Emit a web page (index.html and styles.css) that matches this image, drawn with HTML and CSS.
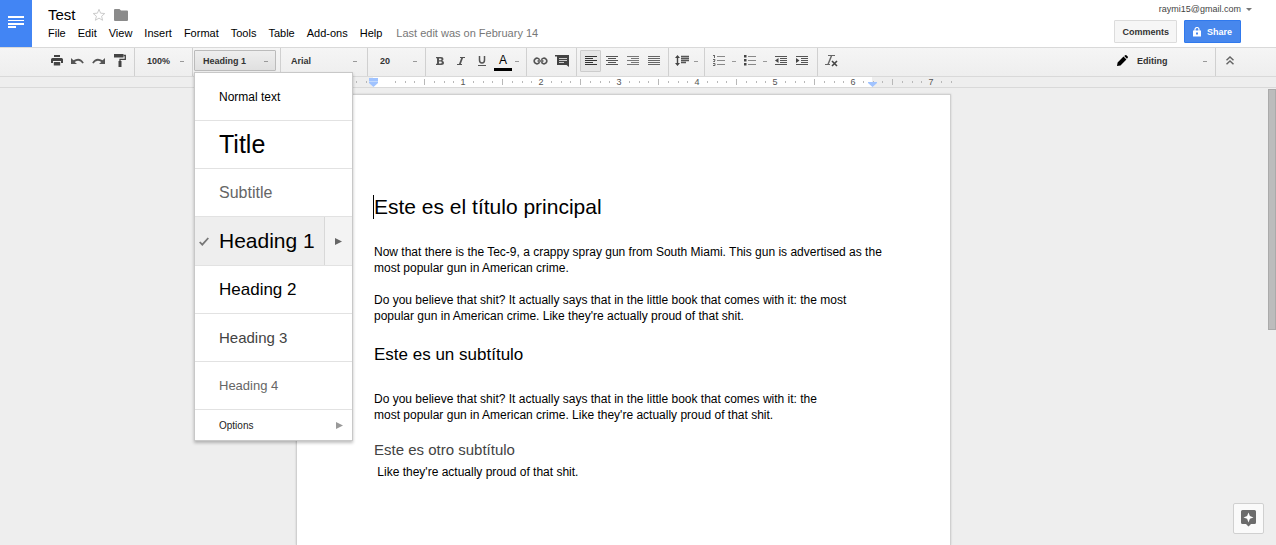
FILE: index.html
```html
<!DOCTYPE html>
<html lang="en">
<head>
<meta charset="utf-8">
<title>Test</title>
<link rel="stylesheet" href="styles.css">
</head>
<body>
<svg class="defs" aria-hidden="true">
  <defs>
    <g id="inch" fill="#b8b8b8">
      <rect x="0" y="2" width="1" height="6"/>
      <rect x="10" y="4" width="1" height="2"/><rect x="20" y="4" width="1" height="2"/><rect x="29" y="4" width="1" height="2"/>
      <rect x="49" y="4" width="1" height="2"/><rect x="59" y="4" width="1" height="2"/><rect x="68" y="4" width="1" height="2"/>
    </g>
  </defs>
</svg>
<header class="header">
  <a class="home" href="#" aria-label="Docs home">
    <svg width="16" height="13" viewBox="0 0 16 13" fill="#fff"><path d="M0 0h16v2H0zM0 4h16v1H0zM0 7h16v2H0zM0 10h8v2H0z"/></svg>
  </a>
  <div class="heading">
    <div class="title-row">
      <h1 class="doc-title">Test</h1>
      <button class="plain" aria-label="Star"><svg width="14" height="14" viewBox="0 0 14 14" fill="none" stroke="#ccc"><path d="M7 1.300l1.600 3.900 4.200.3-3.200 2.700 1 4.100L7 10.100l-3.600 2.200 1-4.100L1.200 5.500l4.200-.3z"/></svg></button>
      <button class="plain" aria-label="Move to folder"><svg width="14" height="12" viewBox="0 0 14 12" fill="#8b8b8b"><path d="M1 0h4.500l1.500 1.500H13q1 0 1 1V11q0 1-1 1H1q-1 0-1-1V1q0-1 1-1z"/></svg></button>
    </div>
    <nav class="menubar">
      <button class="plain">File</button><button class="plain">Edit</button><button class="plain">View</button><button class="plain">Insert</button><button class="plain">Format</button><button class="plain">Tools</button><button class="plain">Table</button><button class="plain">Add-ons</button><button class="plain">Help</button>
      <a class="last-edit" href="#">Last edit was on February 14</a>
    </nav>
  </div>
  <div class="account">
    <button class="plain email">raymi15@gmail.com <svg width="6" height="3" viewBox="0 0 6 3" fill="#777"><path d="M0 0h6L3 3z"/></svg></button>
    <div class="actions">
      <button class="action">Comments</button>
      <button class="action share"><svg width="8" height="10" viewBox="0 0 8 10"><path d="M2 4V2.500a2 2 0 0 1 4 0V4" fill="none" stroke="#fff" stroke-width="1.200"/><path fill="#fff" fill-rule="evenodd" d="M0 3.500h8V9.500H0zM3 5.500v2h2v-2z"/></svg>Share</button>
    </div>
  </div>
</header>

<div class="toolbar" role="toolbar">
  <div class="group first">
    <button class="tool" aria-label="Print"><svg width="12" height="11" viewBox="0 0 12 11" fill="#444"><path d="M3 0h6v2H3zM1.500 3h9Q12 3 12 4.500V8h-2V6H2v2H0V4.500Q0 3 1.500 3z"/><path d="M2.800 7h6.400v3.500H2.800z"/></svg></button>
    <button class="tool" aria-label="Undo"><svg width="13" height="8" viewBox="0 0 13 8"><path d="M0 1v6h6L3.700 4.900Q8.500 1.800 11.500 6.500l1.300-.8Q9-.8 2.400 3.300z" fill="#555"/></svg></button>
    <button class="tool" aria-label="Redo"><svg width="13" height="8" viewBox="0 0 13 8"><path d="M13 1v6H7l2.300-2.100Q4.500 1.800 1.500 6.500L.2 5.700Q4-.8 10.600 3.300z" fill="#555"/></svg></button>
    <button class="tool" aria-label="Paint format"><svg width="12" height="13" viewBox="0 0 12 13"><path d="M0 0h9.500v3.500H0zM4.500 7h3v6h-3z" fill="#444"/><path d="M9.500 1.500h1.800v3.800H6V8" fill="none" stroke="#444" stroke-width="1.300"/></svg></button>
  </div>
  <div class="group zoom"><select class="drop" aria-label="Zoom"><option>100%</option></select></div>
  <div class="group styles">
    <button class="drop style-button" aria-haspopup="menu" aria-expanded="true">Heading 1</button>
    <div class="style-menu" role="menu">
      <button class="item normal" role="menuitem">Normal text</button>
      <button class="item title" role="menuitem">Title</button>
      <button class="item subtitle" role="menuitem">Subtitle</button>
      <button class="item h1 selected" role="menuitem"><svg class="check" width="10" height="9" viewBox="0 0 10 9"><path d="M.7 5l2.600 2.700L9.300 1" fill="none" stroke="#777" stroke-width="1.800"/></svg><span class="label">Heading 1</span><span class="more"><svg width="7" height="7" viewBox="0 0 7 7" fill="#666"><path d="M0 0l7 3.500L0 7z"/></svg></span></button>
      <button class="item h2" role="menuitem">Heading 2</button>
      <button class="item h3" role="menuitem">Heading 3</button>
      <button class="item h4" role="menuitem">Heading 4</button>
      <button class="item options" role="menuitem"><span class="label">Options</span><svg width="7" height="7" viewBox="0 0 7 7" fill="#999"><path d="M0 0l7 3.500L0 7z"/></svg></button>
    </div>
  </div>
  <div class="group font"><select class="drop" aria-label="Font"><option>Arial</option></select></div>
  <div class="group size"><select class="drop" aria-label="Font size"><option>20</option></select></div>
  <div class="group text-tools">
    <button class="tool" aria-label="Bold"><svg width="8" height="8" viewBox="0 0 8 8"><path fill="#555" fill-rule="evenodd" d="M0 0h5q2.500 0 2.500 2 0 1.300-1.200 1.800Q8 4.300 8 5.800 8 8 5.300 8H0V6.700h1V1.300H0zM3 1.400v1.800h1.500q1-.1 1-.9t-1-.9zM3 4.600v2h1.700q1.100-.1 1.100-1t-1.100-1z"/></svg></button>
    <button class="tool" aria-label="Italic"><svg width="8" height="8" viewBox="0 0 8 8" fill="none" stroke="#555"><path d="M3 .5h5M0 7.500h5"/><path d="M5.500 0l-3 8" stroke-width="1.800"/></svg></button>
    <button class="tool" aria-label="Underline"><svg width="8" height="10" viewBox="0 0 8 10" fill="none" stroke="#555"><path d="M1.500 0v4q0 3 2.500 3t2.500-3V0" stroke-width="1.500"/><path d="M0 9.500h8"/></svg></button>
    <button class="tool color" aria-label="Text color">A</button>
    <span class="caret"></span>
  </div>
  <div class="group insert-tools">
    <button class="tool" aria-label="Insert link"><svg width="15" height="8" viewBox="0 0 15 8" fill="none" stroke="#555" stroke-width="1.700"><path d="M6.500 2.800A2.800 2.800 0 1 0 6.500 5.200M8.500 2.800A2.800 2.800 0 1 1 8.500 5.200M4.500 4h6"/></svg></button>
    <button class="tool" aria-label="Insert comment"><svg width="14" height="12" viewBox="0 0 14 12"><path d="M0 0h14v12l-2.500-2H2V1.500H0z" fill="#444"/><path d="M4 3.500h8M4 5.500h8M4 7.500h5" stroke="#ccc"/></svg></button>
  </div>
  <div class="group align-tools">
    <button class="tool active" aria-label="Align left"><svg width="12" height="10" viewBox="0 0 12 10" stroke="#333"><path d="M0 .5h12M0 2.500h8M0 4.500h12M0 6.500h8M0 8.500h12"/></svg></button>
    <button class="tool" aria-label="Align center"><svg width="12" height="10" viewBox="0 0 12 10" stroke="#555"><path d="M0 .5h12M2 2.500h8M0 4.500h12M2 6.500h8M0 8.500h12"/></svg></button>
    <button class="tool" aria-label="Align right"><svg width="12" height="10" viewBox="0 0 12 10" stroke="#777"><path d="M0 .5h12M4 2.500h8M0 4.500h12M4 6.500h8M0 8.500h12"/></svg></button>
    <button class="tool" aria-label="Justify"><svg width="12" height="10" viewBox="0 0 12 10" stroke="#666"><path d="M0 .5h12M0 2.500h12M0 4.500h12M0 6.500h12M0 8.500h12"/></svg></button>
  </div>
  <div class="group spacing-tools">
    <button class="tool" aria-label="Line spacing"><svg width="14" height="11" viewBox="0 0 14 11"><path d="M2.500 0L5 3H3.200v5H5l-2.500 3L0 8h1.800V3H0z" fill="#444"/><path d="M6 1.500h8M6 3.500h8M6 5.500h8M6 7.500h5" stroke="#555" stroke-width="1.400"/></svg></button>
    <span class="caret"></span>
  </div>
  <div class="group list-tools">
    <button class="tool" aria-label="Numbered list"><svg width="12" height="11" viewBox="0 0 12 11" fill="none" stroke="#666"><path d="M1.500 0v3M0 .5h2M0 4.500h2v1L.5 6.500H2M0 8.500h2v2H0"/><path d="M4 1.500h8M4 5.500h8M4 9.500h8" stroke="#888"/></svg></button>
    <span class="caret"></span>
    <button class="tool" aria-label="Bulleted list"><svg width="12" height="11" viewBox="0 0 12 11"><path d="M0 0h2.500v2.500H0zM0 4h2.500v2.500H0zM0 8h2.500v2.500H0z" fill="#444"/><path d="M4 1.500h8M4 5.500h8M4 9.500h8" stroke="#888"/></svg></button>
    <span class="caret"></span>
    <button class="tool" aria-label="Decrease indent"><svg width="12" height="10" viewBox="0 0 12 10"><path d="M0 .5h12M5 2.500h7M5 4.500h7M5 6.500h7M0 8.500h12" stroke="#555"/><path d="M3.500 2v5L0 4.500z" fill="#444"/></svg></button>
    <button class="tool" aria-label="Increase indent"><svg width="12" height="10" viewBox="0 0 12 10"><path d="M0 .5h12M5 2.500h7M5 4.500h7M5 6.500h7M0 8.500h12" stroke="#555"/><path d="M0 2v5l3.500-2.500z" fill="#444"/></svg></button>
  </div>
  <div class="group clear-tools">
    <button class="tool" aria-label="Clear formatting"><svg width="13" height="12" viewBox="0 0 13 12" fill="none" stroke="#666"><path d="M3 .5h7M0 9.500h5"/><path d="M6.800 0L3 9.500" stroke-width="1.400"/><path d="M7 6l5 5M12 6l-5 5" stroke="#444" stroke-width="1.600"/></svg></button>
  </div>
  <div class="group mode">
    <svg width="11" height="11" viewBox="0 0 11 11" fill="#000"><path d="M0 11l.6-3.500L6.500 1.600l2.900 2.900L3.500 10.400zM7.200 1l1-.8q.6-.4 1.200 0l1.300 1.300q.5.600 0 1.300l-.7.900z"/></svg>
    <select class="drop" aria-label="Mode"><option>Editing</option></select>
  </div>
  <div class="group collapse">
    <button class="tool" aria-label="Hide the menus"><svg width="8" height="9" viewBox="0 0 8 9" fill="none" stroke="#666" stroke-width="1.500"><path d="M.5 4.200L4 1l3.500 3.200M.5 8.200L4 5l3.500 3.200"/></svg></button>
  </div>
</div>

<div class="ruler">
  <div class="scale">
    <div class="lead"><svg width="127" height="10" fill="#b8b8b8"><path d="M59 4h1v2h-1zM69 4h1v2h-1zM98 4h1v2h-1zM108 4h1v2h-1zM117 4h1v2h-1z"/></svg></div>
    <div class="inch"><svg width="78" height="10"><use href="#inch"/></svg><span>1</span></div>
    <div class="inch"><svg width="78" height="10"><use href="#inch"/></svg><span>2</span></div>
    <div class="inch"><svg width="78" height="10"><use href="#inch"/></svg><span>3</span></div>
    <div class="inch"><svg width="78" height="10"><use href="#inch"/></svg><span>4</span></div>
    <div class="inch"><svg width="78" height="10"><use href="#inch"/></svg><span>5</span></div>
    <div class="inch"><svg width="78" height="10"><use href="#inch"/></svg><span>6</span></div>
    <div class="inch"><svg width="66" height="10"><use href="#inch"/></svg><span>7</span></div>
    <svg class="marker left" width="9" height="9" viewBox="0 0 9 9" fill="#a0c3ff"><path d="M0 0h9v5L4.500 9 0 5z"/><path d="M0 3h9v1H0z" fill="#c4dafc"/></svg>
    <svg class="marker right" width="9" height="5" viewBox="0 0 9 5" fill="#a0c3ff"><path d="M0 0h9v1L4.500 5 0 1z"/></svg>
  </div>
</div>

<main class="workspace">
  <article class="page">
    <h2 class="d-h1">Este es el título principal</h2>
    <p>Now that there is the Tec-9, a crappy spray gun from South Miami. This gun is advertised as the<br>most popular gun in American crime.</p>
    <p>Do you believe that shit? It actually says that in the little book that comes with it: the most<br>popular gun in American crime. Like they're actually proud of that shit.</p>
    <h3 class="d-h2">Este es un subtítulo</h3>
    <p>Do you believe that shit? It actually says that in the little book that comes with it: the<br>most popular gun in American crime. Like they're actually proud of that shit.</p>
    <h4 class="d-h3">Este es otro subtítulo</h4>
    <p>&nbsp;Like they're actually proud of that shit.</p>
  </article>
  <div class="scrollbar"></div>
  <button class="explore" aria-label="Explore"><svg width="15" height="17" viewBox="0 0 15 17"><path d="M1.500 0h12Q15 0 15 1.500v11q0 1.500-1.500 1.500H10l-2.500 2.500L5 14H1.500Q0 14 0 12.500v-11Q0 0 1.500 0z" fill="#6b6b6b"/><path d="M7.500 2.500L8.900 6l3.600 1.400-3.600 1.400-1.400 3.600-1.400-3.600-3.600-1.400L6.100 6z" fill="#fff"/></svg></button>
</main>
</body>
</html>
```
FILE: styles.css
```css
* { box-sizing: border-box; }
body {
  margin: 0;
  height: 100vh;
  display: flex;
  flex-direction: column;
  overflow: hidden;
  background: #eee;
  color: #000;
  font-family: "Liberation Sans", Arial, sans-serif;
  font-size: 11px;
}
button, select { font: inherit; color: inherit; margin: 0; }
svg { display: block; flex: none; }
h1, h2, h3, h4, p { margin: 0; font-weight: normal; }
.defs { position: absolute; width: 0; height: 0; }
.plain { border: 0; padding: 0; background: none; }

/* Header */
.header { display: flex; flex: none; height: 47px; background: #fff; }
.home {
  display: flex;
  width: 32px;
  align-items: center;
  justify-content: center;
  padding-bottom: 3px;
  background: #4285f4;
}
.heading { flex: 1; padding: 6px 0 0 16px; }
.title-row { display: flex; align-items: center; height: 18px; gap: 8px; }
.doc-title { font-size: 15px; line-height: 18px; margin-right: 8px; }
.menubar { display: flex; align-items: center; gap: 12px; height: 18px; white-space: nowrap; }
.last-edit { margin-left: 2px; color: #777; text-decoration: none; }
.account {
  display: flex;
  flex-direction: column;
  align-items: flex-end;
  gap: 6px;
  padding: 4px 24px 0 0;
}
.email { display: flex; align-items: center; gap: 5px; height: 10px; font-size: 9px; color: #444; }
.actions { display: flex; gap: 7px; margin-right: 11px; }
.action {
  height: 23px;
  padding: 0 7px;
  border: 1px solid #dcdcdc;
  border-radius: 1px;
  background: #f6f6f6;
  font-size: 9px;
  font-weight: bold;
  color: #333;
}
.share { display: flex; align-items: center; gap: 6px; padding: 0 8px; background: #4787ed; border-color: #3079ed; color: #fff; }

/* Toolbar */
.toolbar {
  position: relative;
  z-index: 1;
  display: flex;
  flex: none;
  height: 30px;
  border-top: 1px solid #d9d9d9;
  border-bottom: 1px solid #d9d9d9;
  background: linear-gradient(#f5f5f5, #eee);
}
.group { display: flex; align-items: center; padding: 0 3px 3px; border-right: 1px solid #d0d0d0; }
.tool {
  display: flex;
  align-items: center;
  justify-content: center;
  width: 21px;
  height: 22px;
  padding: 0;
  border: 0;
  background: none;
}
.active { border: 1px solid #ccc; border-radius: 1px; background: #e6e6e6; }
.first { padding-left: 46px; padding-right: 4px; }
.drop {
  width: 100%;
  height: 21px;
  padding: 0 9px;
  border: 0;
  border-radius: 1px;
  appearance: none;
  background: linear-gradient(#999, #999) right 8px top 11px / 4px 1px no-repeat;
  font-size: 9px;
  font-weight: bold;
  color: #333;
  text-align: left;
}
.caret { width: 4px; height: 1px; margin: 2px 3px 0; background: #999; }
.zoom { width: 58px; padding-right: 0; }
.styles { position: relative; width: 88px; padding-left: 1px; padding-right: 4px; }
.style-button {
  padding: 0 8px;
  border: 1px solid #bbb;
  background: linear-gradient(#999, #999) right 7px top 10px / 4px 1px no-repeat, linear-gradient(#eee, #e0e0e0);
}
.font { width: 87px; padding-left: 1px; padding-right: 2px; }
.size { width: 58px; padding-right: 0; }
.text-tools { width: 101px; }
.color { font-size: 12px; box-shadow: inset 0 -3px #000; width: 18px; height: 18px; margin: 3px 0 0 2px; padding-bottom: 4px; }
.align-tools { width: 92px; }
.insert-tools { width: 50px; }
.spacing-tools { width: 36px; }
.list-tools { width: 113px; }
.clear-tools { border: 0; }
.mode { width: 102px; margin-left: auto; padding-right: 0; }
.collapse { width: 60px; border: 0; }

/* Paragraph style menu */
.style-menu {
  position: absolute;
  top: 24px;
  left: 1px;
  width: 159px;
  border: 1px solid #c8c8c8;
  background: #fff;
  box-shadow: 0 2px 3px rgba(0, 0, 0, 0.25);
}
.item {
  display: flex;
  align-items: center;
  width: 100%;
  height: 48px;
  padding: 0 0 0 24px;
  border: 0;
  border-bottom: 1px solid #e2e2e2;
  background: none;
  text-align: left;
}
.label { flex: 1; }
.normal { font-size: 12px; }
.title { font-size: 25px; }
.subtitle { font-size: 16px; color: #666; }
.h1 { height: 49px; font-size: 21px; }
.h2 { font-size: 17px; }
.h3 { font-size: 15px; color: #434343; }
.h4 { font-size: 13px; color: #666; }
.options { height: 30px; border: 0; padding-right: 9px; font-size: 10px; color: #222; }
.selected { padding-left: 4px; background: #eee; }
.check { margin-right: 10px; }
.more { display: flex; align-items: center; padding-left: 10px; width: 28px; height: 100%; border-left: 1px solid #d8d8d8; background: #f3f3f3; }

/* Ruler */
.ruler { flex: none; display: flex; justify-content: center; height: 11px; padding-right: 28px; border-bottom: 1px solid #d9d9d9; }
.scale {
  position: relative;
  display: flex;
  width: 654px;
  background: linear-gradient(#fff, #fff) 76px 0 / 499px 10px no-repeat;
}
.lead { width: 127px; flex: none; }
.inch { position: relative; width: 78px; flex: none; text-align: center; font-size: 9px; line-height: 10px; color: #555; }
.inch svg { position: absolute; top: 0; left: 0; }
.marker { position: absolute; }
.marker.left { left: 72px; top: 1px; }
.marker.right { left: 571px; top: 5px; }

/* Document */
.workspace {
  position: relative;
  flex: 1;
  display: flex;
  justify-content: center;
  min-height: 0;
  padding: 6px 29px 0 0;
}
.page {
  width: 655px;
  padding: 100px 60px 0 77px;
  border: 1px solid #d0d0d0;
  border-bottom: 0;
  background: #fff;
  box-shadow: 0 0 2px rgba(0, 0, 0, 0.15);
  font-size: 12px;
  line-height: 16px;
}
.page p { margin-bottom: 16px; }
.page .d-h1 { font-size: 21px; line-height: 24px; margin-bottom: 25px; box-shadow: -1px 0 #000; }
.page .d-h2 { font-size: 17px; line-height: 20px; margin: 21px 0 26px; }
.page .d-h3 { font-size: 15px; line-height: 18px; margin: 18px 0 5px; color: #434343; }
.scrollbar { position: absolute; top: 1px; right: 0; width: 8px; height: 241px; border: 1px solid #aaa; background: #bcbcbc; }
.explore {
  position: absolute;
  right: 12px;
  bottom: 11px;
  display: flex;
  align-items: center;
  justify-content: center;
  width: 31px;
  height: 31px;
  padding: 0;
  border: 1px solid #d0d0d0;
  border-radius: 2px;
  background: #fafafa;
}
```
